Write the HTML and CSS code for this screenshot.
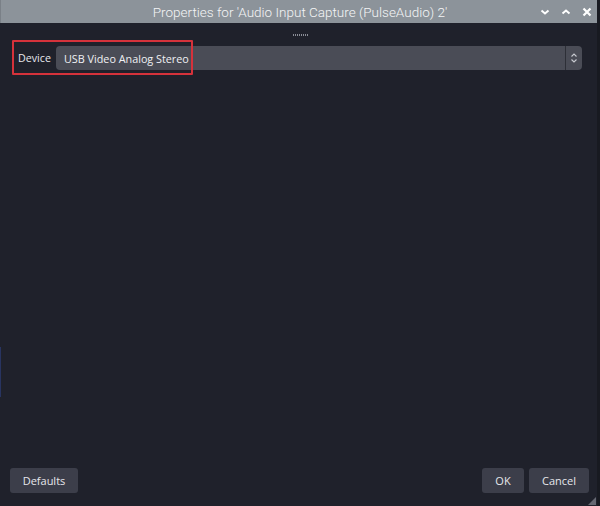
FILE: index.html
```html
<!DOCTYPE html>
<html lang="en">
<head>
    <meta charset="UTF-8">
    <title>Properties</title>
    <link rel="stylesheet" href="styles.css">
</head>
<body>
    <div class="window">
        <!-- title bar -->
        <div class="titlebar">
            <span class="title">Properties for 'Audio Input Capture (PulseAudio) 2'</span>
            <div class="controls">
                <svg width="12" height="12" viewBox="0 0 12 12"><path d="M2.5 4.5 L6 7.5 L9.5 4.5" fill="none" stroke="#fff" stroke-width="2"/></svg>
                <svg width="12" height="12" viewBox="0 0 12 12"><path d="M2.5 7.5 L6 4.5 L9.5 7.5" fill="none" stroke="#fff" stroke-width="2"/></svg>
                <svg width="12" height="12" viewBox="0 0 12 12"><path d="M2.5 2.5 L9.5 9.5 M9.5 2.5 L2.5 9.5" fill="none" stroke="#fff" stroke-width="2.2"/></svg>
            </div>
        </div>

        <div class="splitter"><span></span></div>

        <!-- properties -->
        <div class="content">
            <div class="row">
                <label>Device</label>
                <div class="combo">
                    <span class="value">USB Video Analog Stereo</span>
                    <span class="arrow">
                        <svg width="8" height="12" viewBox="0 0 8 12"><path d="M1.5 4.5 L4 2 L6.5 4.5 M1.5 7.5 L4 10 L6.5 7.5" fill="none" stroke="#c8cad0" stroke-width="1.1"/></svg>
                    </span>
                </div>
                <div class="highlight"></div>
            </div>
        </div>

        <!-- buttons -->
        <div class="footer">
            <button class="defaults">Defaults</button>
            <div class="right">
                <button class="ok">OK</button>
                <button class="cancel">Cancel</button>
            </div>
        </div>
        <div class="grip"></div>
        <div class="edge-mark"></div>
    </div>
</body>
</html>
```

FILE: styles.css
```css
body {
    margin: 0;
    background-color: #1f212b;
    font-family: "Open Sans", "Noto Sans", sans-serif;
    color: #e4e5ea;
}
.window {
    position: relative;
    width: 600px;
    height: 506px;
    display: flex;
    flex-direction: column;
    background-color: #1f212b;
    border-right: 3px solid #181a21;
    box-sizing: border-box;
}
.titlebar {
    height: 23px;
    background-color: #8c939a;
    display: flex;
    align-items: center;
    justify-content: center;
    position: relative;
    border-left: 1px solid #7a8087;
}
.title {
    font-family: Roboto, "Noto Sans", sans-serif;
    font-weight: 300;
    font-size: 13.5px;
    color: #f4f5f6;
    margin-left: 2px;
}
.controls {
    position: absolute;
    right: 4px;
    top: 6px;
    display: flex;
    gap: 9px;
}
.splitter {
    height: 20px;
    display: flex;
    justify-content: center;
    align-items: center;
}
.splitter span {
    width: 15px;
    height: 2px;
    margin-left: 3px;
    margin-top: 3px;
    background-image: repeating-linear-gradient(90deg, #8a8d96 0 1px, transparent 1px 2px);
}
.content {
    flex: 1;
    padding: 3px 15px 0 18px;
}
.row {
    position: relative;
    display: flex;
    align-items: center;
    height: 24px;
}
.row label {
    font-size: 10.7px;
    width: 38px;
    color: #e6e7ec;
}
.combo {
    flex: 1;
    height: 24px;
    background-color: #4a4c56;
    border-radius: 4px;
    display: flex;
    align-items: center;
}
.value {
    flex: 1;
    font-size: 10.8px;
    padding-left: 8px;
    color: #f0f1f4;
}
.arrow {
    width: 16px;
    height: 24px;
    border-left: 1px solid #2d2f37;
    display: flex;
    align-items: center;
    justify-content: center;
}
.highlight {
    position: absolute;
    left: -6px;
    top: -6px;
    width: 177px;
    height: 31px;
    border: 2px solid #d5323b;
    border-radius: 1px;
}
.footer {
    display: flex;
    justify-content: space-between;
    padding: 0 8px 13px 10px;
}
.right {
    display: flex;
    gap: 5px;
}
button {
    background-color: #3c3e4a;
    color: #e6e7ec;
    font-family: "Open Sans", "Noto Sans", sans-serif;
    font-size: 11px;
    border: none;
    border-radius: 3px;
    height: 25px;
    padding: 0;
}
.defaults {
    width: 68px;
}
.ok {
    width: 42px;
}
.cancel {
    width: 60px;
}
.grip {
    position: absolute;
    right: 1px;
    bottom: 1px;
    width: 8px;
    height: 8px;
    background-image: radial-gradient(#6b6e78 0.7px, transparent 0.8px);
    background-size: 2px 2px;
    clip-path: polygon(100% 0, 100% 100%, 0 100%);
}
.edge-mark {
    position: absolute;
    left: 0;
    top: 347px;
    width: 1px;
    height: 50px;
    background-color: #283460;
}
```
